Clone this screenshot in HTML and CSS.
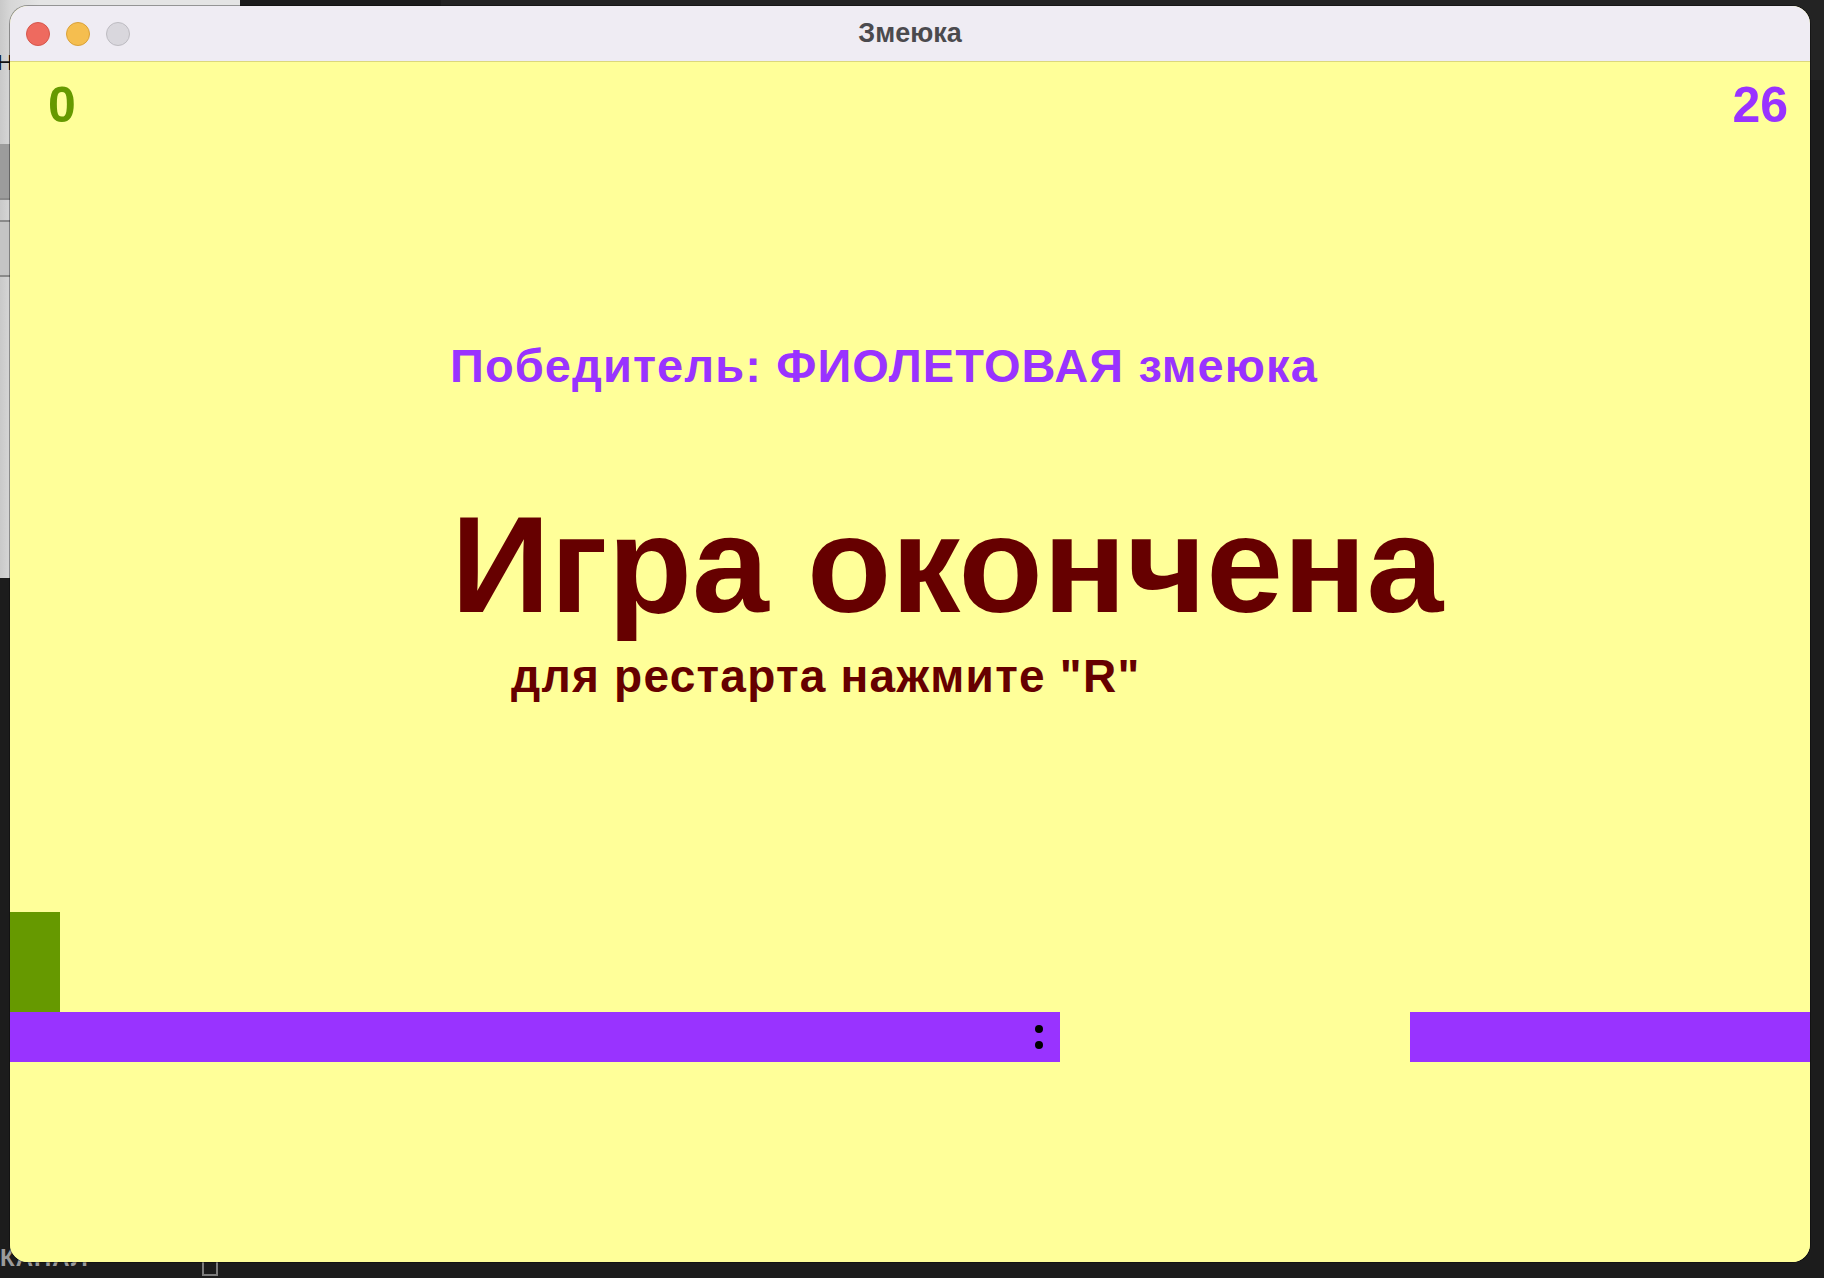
FILE: index.html
```html
<!DOCTYPE html>
<html lang="ru">
<head>
<meta charset="utf-8">
<title>Змеюка</title>
<link rel="stylesheet" href="styles.css">
</head>
<body>
<div class="desktop">
  <div class="bg-window">
    <div class="bg-band bg-band-a"></div>
    <div class="bg-band bg-band-b"></div>
    <span class="bg-letter">Н</span>
  </div>
  <div class="bg-dark-top"></div>
  <div class="dock-label">КАНАЛ</div>
  <div class="dock-box"></div>

  <main class="window">
    <header class="titlebar">
      <div class="lights">
        <span class="light light-close"></span>
        <span class="light light-min"></span>
        <span class="light light-max"></span>
      </div>
      <div class="title">Змеюка</div>
      <div></div>
    </header>

    <section class="game">
      <div class="scores">
        <span class="score score-green">0</span>
        <span class="score score-purple">26</span>
      </div>

      <div class="message">
        <p class="winner">Победитель: ФИОЛЕТОВАЯ змеюка</p>
        <p class="gameover">Игра окончена</p>
        <p class="restart">для рестарта нажмите "R"</p>
      </div>

      <div class="board">
        <div class="snake-green"></div>
        <div class="snake-purple seg-body">
          <div class="eyes"><span class="eye"></span><span class="eye"></span></div>
        </div>
        <div class="snake-purple seg-tail"></div>
      </div>
    </section>
  </main>
</div>
</body>
</html>
```

FILE: styles.css
```css
html, body {
  margin: 0;
  padding: 0;
}

body {
  width: 1824px;
  height: 1278px;
  overflow: hidden;
  background: #1c1c1c;
  font-family: "Liberation Sans", Arial, sans-serif;
}

.desktop {
  position: relative;
  width: 1824px;
  height: 1278px;
  padding: 6px 0 0 10px;
  box-sizing: border-box;
}

/* background desktop pieces */
.bg-window {
  position: absolute;
  left: 0;
  top: 0;
  width: 240px;
  height: 578px;
  background: linear-gradient(90deg, #c9c9c9 0, #d6d6d6 10px, #e4e4e4 40px);
}

.bg-band {
  position: absolute;
  left: 0;
  width: 12px;
}

.bg-band-a {
  top: 144px;
  height: 54px;
  background: #9c9c9c;
  border-bottom: 2px solid #8a8a8a;
}

.bg-band-b {
  top: 220px;
  height: 53px;
  background: #c4c4c4;
  border-top: 2px solid #8a8a8a;
  border-bottom: 2px solid #8a8a8a;
}

.bg-letter {
  position: absolute;
  left: -3px;
  top: 50px;
  font-size: 22px;
  color: #111;
}

.bg-dark-top {
  position: absolute;
  left: 441px;
  top: 0;
  right: 0;
  height: 80px;
  background: #232323;
}

.dock-label {
  position: absolute;
  left: 0;
  top: 1244px;
  font-size: 24px;
  font-weight: bold;
  color: #9b9b9b;
  letter-spacing: 1px;
}

.dock-box {
  position: absolute;
  left: 202px;
  top: 1258px;
  width: 12px;
  height: 14px;
  border: 2px solid #7c7c7c;
}

/* main window */
.window {
  position: relative;
  width: 1800px;
  height: 1256px;
  border-radius: 18px;
  overflow: hidden;
  background: #ffff99;
  box-shadow: 0 0 0 1px rgba(0, 0, 0, 0.35);
}

.titlebar {
  height: 55px;
  background: #efecf3;
  border-bottom: 1px solid #dcd87c;
  display: grid;
  grid-template-columns: 1fr auto 1fr;
  align-items: center;
}

.lights {
  display: flex;
  gap: 16px;
  padding-left: 16px;
}

.light {
  width: 22px;
  height: 22px;
  border-radius: 50%;
  border: 1px solid transparent;
}

.light-close {
  background: #ee6a5f;
  border-color: #d5564b;
}

.light-min {
  background: #f5be4f;
  border-color: #d9a13a;
}

.light-max {
  background: #d9d7dd;
  border-color: #bdbbc1;
}

.title {
  font-size: 27px;
  font-weight: bold;
  color: #4b4a4e;
}

/* game canvas */
.game {
  height: 1200px;
  background: #ffff99;
  display: flex;
  flex-direction: column;
  font-weight: bold;
}

.scores {
  display: flex;
  justify-content: space-between;
  padding: 17.5px 22px 0 38px;
  font-size: 50px;
  line-height: 50px;
}

.score-green {
  color: #669900;
}

.score-purple {
  color: #9933ff;
}

.message p {
  margin: 0;
  line-height: 1;
}

.message .winner {
  margin-top: 212.7px;
  margin-left: 440px;
  font-size: 47px;
  letter-spacing: 1.1px;
  color: #9933ff;
}

.message .gameover {
  margin-top: 105.9px;
  margin-left: 441px;
  font-size: 138px;
  color: #660000;
}

.message .restart {
  margin-top: 20px;
  margin-left: 501px;
  font-size: 46px;
  letter-spacing: 1.26px;
  color: #660000;
}

.board {
  margin-top: 212.9px;
  display: grid;
  grid-template-columns: repeat(36, 50px);
  grid-template-rows: repeat(3, 50px);
}

.snake-green {
  grid-column: 1 / 2;
  grid-row: 1 / 3;
  background: #669900;
}

.snake-purple {
  background: #9933ff;
  grid-row: 3 / 4;
}

.seg-body {
  grid-column: 1 / 22;
  display: flex;
  justify-content: flex-end;
  align-items: center;
}

.seg-tail {
  grid-column: 29 / 37;
}

.eyes {
  display: flex;
  flex-direction: column;
  gap: 8px;
  padding-right: 17px;
}

.eye {
  width: 8px;
  height: 8px;
  border-radius: 50%;
  background: #000;
}
```
